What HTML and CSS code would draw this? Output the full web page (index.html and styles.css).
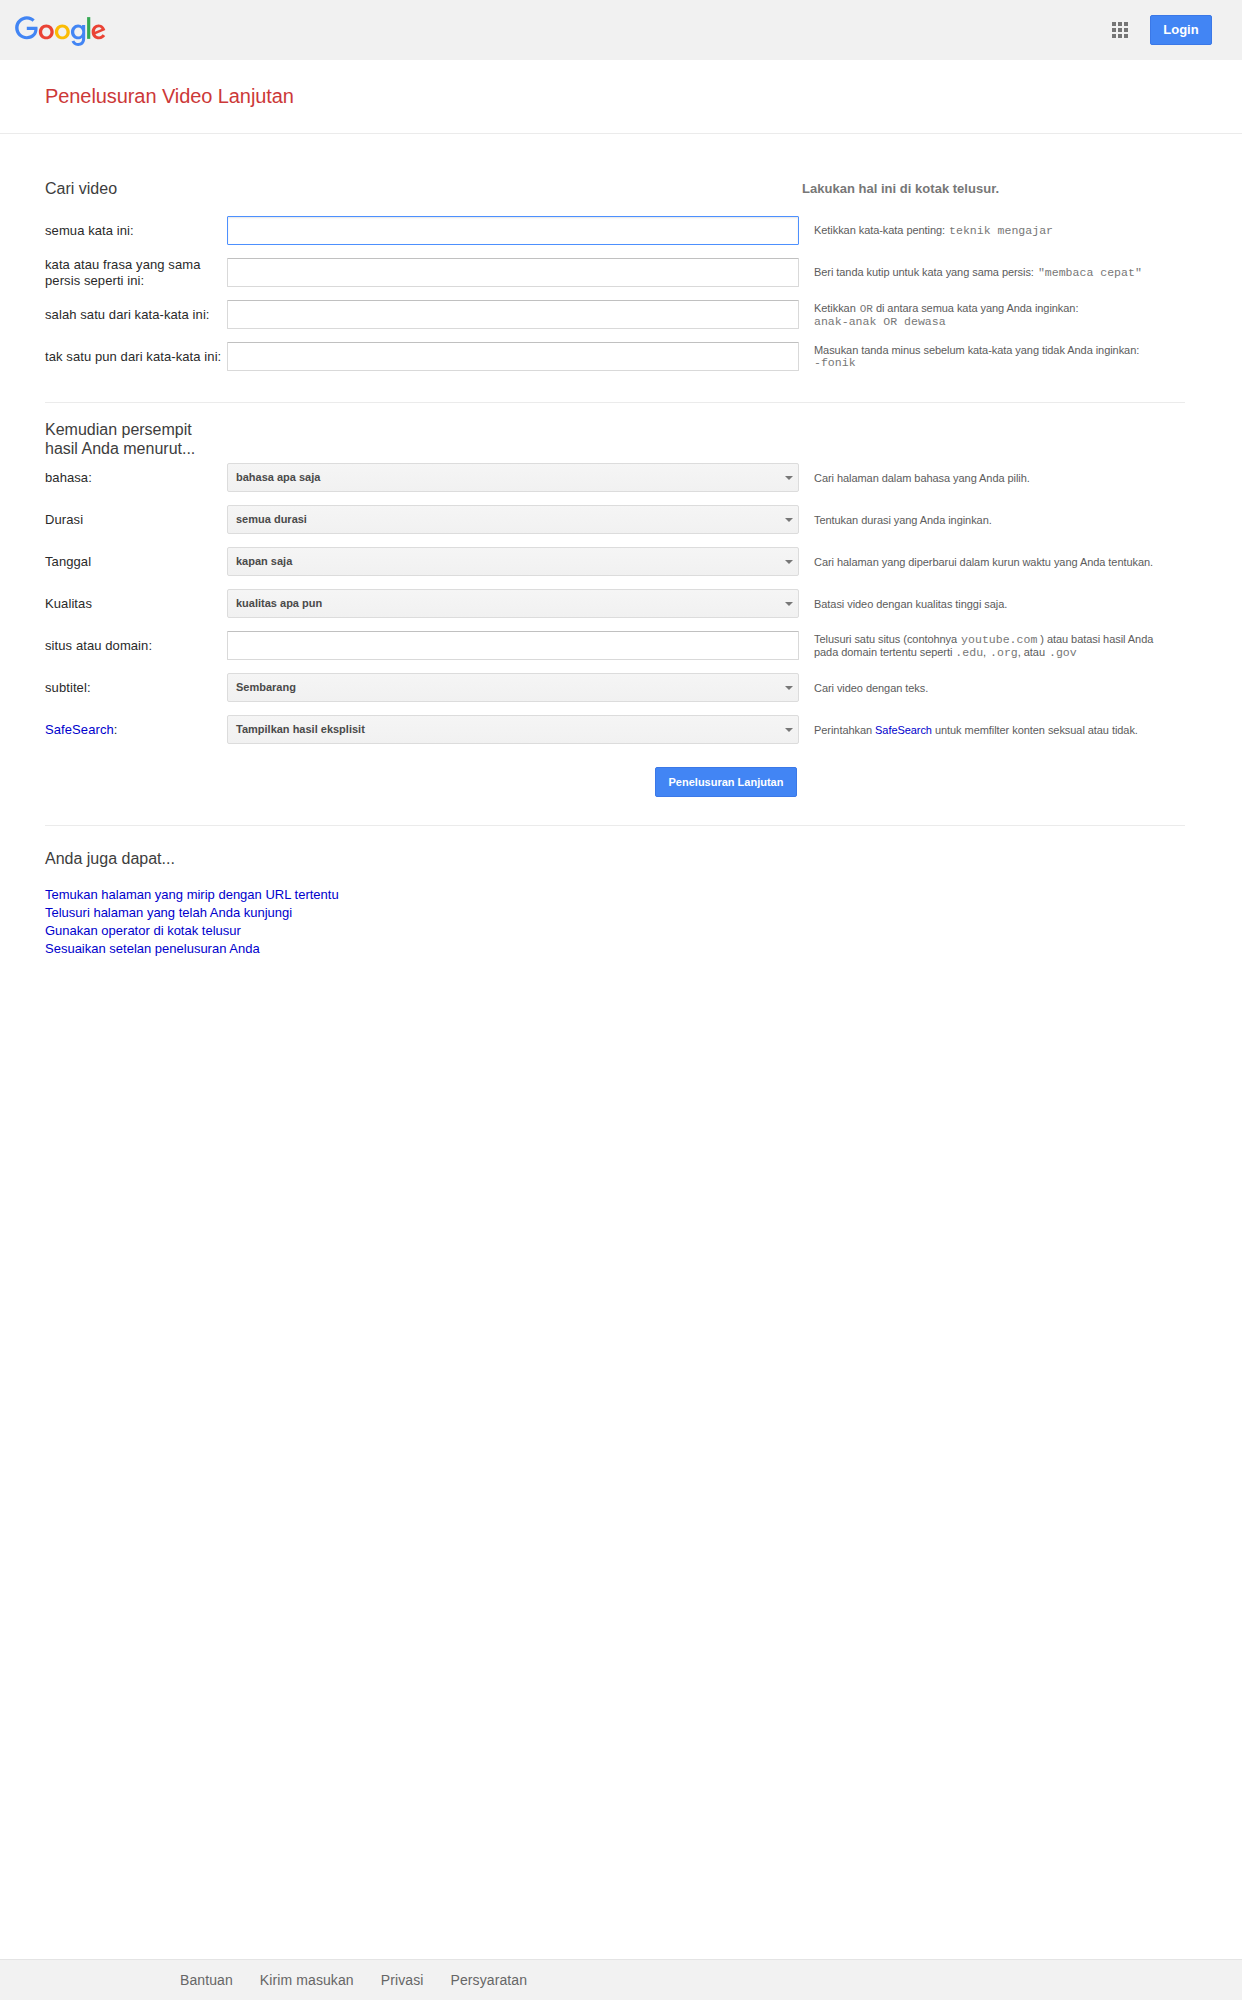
FILE: index.html
```html
<!DOCTYPE html>
<html lang="id">
<head>
<meta charset="utf-8">
<title>Penelusuran Video Lanjutan</title>
<link rel="stylesheet" href="styles.css">
</head>
<body>
<header class="topbar">
  <svg class="logo" viewBox="0 0 272 92" aria-label="Google">
    <path fill="#EA4335" d="M115.75 47.18c0 12.77-9.99 22.18-22.25 22.18s-22.25-9.41-22.25-22.18C71.25 34.32 81.24 25 93.5 25s22.25 9.32 22.25 22.18zm-9.74 0c0-7.98-5.79-13.44-12.51-13.44S80.99 39.2 80.99 47.18c0 7.9 5.79 13.44 12.51 13.44s12.51-5.55 12.51-13.44z"/>
    <path fill="#FBBC05" d="M163.75 47.18c0 12.77-9.99 22.18-22.25 22.18s-22.25-9.41-22.25-22.18c0-12.85 9.99-22.18 22.25-22.18s22.25 9.32 22.25 22.18zm-9.74 0c0-7.98-5.79-13.44-12.51-13.44s-12.51 5.46-12.51 13.44c0 7.9 5.79 13.44 12.51 13.44s12.51-5.55 12.51-13.44z"/>
    <path fill="#4285F4" d="M209.75 26.34v39.82c0 16.38-9.66 23.07-21.08 23.07-10.75 0-17.22-7.19-19.66-13.07l8.48-3.53c1.51 3.61 5.21 7.87 11.17 7.87 7.31 0 11.84-4.51 11.84-13v-3.19h-.34c-2.18 2.69-6.38 5.04-11.68 5.04-11.09 0-21.25-9.66-21.25-22.09 0-12.52 10.16-22.26 21.25-22.26 5.29 0 9.49 2.35 11.68 4.96h.34v-3.61h9.25zm-8.56 20.92c0-7.81-5.21-13.52-11.84-13.52-6.72 0-12.35 5.71-12.35 13.52 0 7.73 5.63 13.36 12.35 13.36 6.63 0 11.84-5.63 11.84-13.36z"/>
    <path fill="#34A853" d="M225 3v65h-9.5V3h9.5z"/>
    <path fill="#EA4335" d="M262.02 54.48l7.56 5.04c-2.44 3.61-8.32 9.83-18.48 9.83-12.6 0-22.01-9.74-22.01-22.18 0-13.19 9.49-22.18 20.92-22.18 11.51 0 17.14 9.16 18.98 14.11l1.01 2.52-29.65 12.28c2.27 4.45 5.8 6.72 10.75 6.72 4.96 0 8.4-2.44 10.92-6.14zm-23.27-7.98l19.82-8.23c-1.09-2.77-4.37-4.7-8.23-4.7-4.95 0-11.84 4.37-11.59 12.93z"/>
    <path fill="#4285F4" d="M35.29 41.41V32H67c.31 1.64.47 3.58.47 5.68 0 7.06-1.93 15.79-8.15 22.01-6.05 6.3-13.78 9.66-24.02 9.66C16.32 69.35.36 53.89.36 34.91.36 15.93 16.32.47 35.3.47c10.5 0 17.98 4.12 23.6 9.49l-6.64 6.64c-4.03-3.78-9.49-6.72-16.97-6.72-13.86 0-24.7 11.17-24.7 25.03 0 13.86 10.84 25.03 24.7 25.03 8.99 0 14.11-3.61 17.39-6.89 2.66-2.66 4.41-6.46 5.1-11.65l-22.49.01z"/>
  </svg>
  <div class="apps" aria-label="Aplikasi">
    <i></i><i></i><i></i><i></i><i></i><i></i><i></i><i></i><i></i>
  </div>
  <a class="login" href="#">Login</a>
</header>

<div class="titleband"><h1>Penelusuran Video Lanjutan</h1></div>

<main class="content">
  <div class="headrow">
    <h2 class="heading">Cari video</h2>
    <div class="headhint">Lakukan hal ini di kotak telusur.</div>
  </div>
  <div class="rows">
    <div class="row"><label class="lbl">semua kata ini:</label><input class="field focused" type="text"><p class="hint">Ketikkan kata-kata penting: <span class="mono">teknik mengajar</span></p></div>
    <div class="row"><label class="lbl">kata atau frasa yang sama persis seperti ini:</label><input class="field" type="text"><p class="hint">Beri tanda kutip untuk kata yang sama persis: <span class="mono">"membaca cepat"</span></p></div>
    <div class="row"><label class="lbl">salah satu dari kata-kata ini:</label><input class="field" type="text"><p class="hint">Ketikkan <span class="mono small">OR</span> di antara semua kata yang Anda inginkan:<br><span class="mono">anak-anak OR dewasa</span></p></div>
    <div class="row"><label class="lbl">tak satu pun dari kata-kata ini:</label><input class="field" type="text"><p class="hint">Masukan tanda minus sebelum kata-kata yang tidak Anda inginkan:<br><span class="mono">-fonik</span></p></div>
  </div>
  <hr class="rule first">

  <h2 class="heading narrow">Kemudian persempit<br>hasil Anda menurut...</h2>
  <div class="rows">
    <div class="row"><label class="lbl">bahasa:</label><div class="select">bahasa apa saja</div><p class="hint">Cari halaman dalam bahasa yang Anda pilih.</p></div>
    <div class="row"><label class="lbl">Durasi</label><div class="select">semua durasi</div><p class="hint">Tentukan durasi yang Anda inginkan.</p></div>
    <div class="row"><label class="lbl">Tanggal</label><div class="select">kapan saja</div><p class="hint">Cari halaman yang diperbarui dalam kurun waktu yang Anda tentukan.</p></div>
    <div class="row"><label class="lbl">Kualitas</label><div class="select">kualitas apa pun</div><p class="hint">Batasi video dengan kualitas tinggi saja.</p></div>
    <div class="row"><label class="lbl">situs atau domain:</label><input class="field" type="text"><p class="hint">Telusuri satu situs (contohnya <span class="mono">youtube.com</span> ) atau batasi hasil Anda<br>pada domain tertentu seperti <span class="mono">.edu</span>, <span class="mono">.org</span>, atau <span class="mono">.gov</span></p></div>
    <div class="row"><label class="lbl">subtitel:</label><div class="select">Sembarang</div><p class="hint">Cari video dengan teks.</p></div>
    <div class="row"><label class="lbl"><a href="#">SafeSearch</a>:</label><div class="select">Tampilkan hasil eksplisit</div><p class="hint">Perintahkan <a href="#">SafeSearch</a> untuk memfilter konten seksual atau tidak.</p></div>
  </div>
  <div class="submitrow"><button class="submit" type="button">Penelusuran Lanjutan</button></div>
  <hr class="rule second">

  <h2 class="heading also">Anda juga dapat...</h2>
  <ul class="links">
    <li><a href="#">Temukan halaman yang mirip dengan URL tertentu</a></li>
    <li><a href="#">Telusuri halaman yang telah Anda kunjungi</a></li>
    <li><a href="#">Gunakan operator di kotak telusur</a></li>
    <li><a href="#">Sesuaikan setelan penelusuran Anda</a></li>
  </ul>
</main>

<footer class="footer">
  <a href="#">Bantuan</a><a href="#">Kirim masukan</a><a href="#">Privasi</a><a href="#">Persyaratan</a>
</footer>
</body>
</html>
```

FILE: styles.css
```css
* { box-sizing: border-box; }
html, body { margin: 0; padding: 0; }
body {
  min-height: 2000px;
  display: flex;
  flex-direction: column;
  background: #fff;
  color: #222;
  font-family: "Liberation Sans", Arial, sans-serif;
  font-size: 13px;
}
a { color: #0000cc; text-decoration: none; }

.topbar {
  height: 60px;
  background: #f1f1f1;
  display: flex;
  align-items: center;
  padding: 0 30px 0 15px;
}
.logo { width: 91px; height: 31px; margin-top: 3px; margin-right: auto; }
.apps {
  display: grid;
  grid-template-columns: repeat(3, 4px);
  grid-auto-rows: 4px;
  gap: 2px;
  margin-right: 22px;
}
.apps i { display: block; background: #757575; }
.login {
  width: 62px;
  height: 30px;
  line-height: 28px;
  text-align: center;
  background: #4285f4;
  border: 1px solid #3b78e7;
  border-radius: 2px;
  color: #fff;
  font-weight: bold;
  font-size: 13px;
}

.titleband { height: 74px; padding: 24px 45px 0; border-bottom: 1px solid #ebebeb; }
.titleband h1 { margin: 0; font-size: 20px; line-height: 24px; font-weight: normal; letter-spacing: -0.08px; color: #cc3838; }

.content { padding: 0 57px 0 45px; }
.heading { margin: 0; font-size: 16px; line-height: 18px; font-weight: normal; color: #3d3d3d; }
.headrow {
  display: grid;
  grid-template-columns: 754px 1fr;
  align-items: center;
  padding-top: 46px;
  margin-bottom: 18px;
}
.headhint { padding-left: 3px; font-size: 13px; line-height: 18px; font-weight: bold; letter-spacing: 0.02px; color: #777; }

.rows { display: flex; flex-direction: column; gap: 13px; }
.row {
  display: grid;
  grid-template-columns: 182px 572px 1fr;
  grid-template-rows: 29px;
  align-items: center;
  height: 29px;
}
.lbl { font-size: 13px; line-height: 16px; letter-spacing: 0.09px; color: #2a2a2a; padding-right: 4px; }
.field {
  display: block;
  width: 100%;
  height: 29px;
  margin: 0;
  padding: 0 8px;
  background: #fff;
  border: 1px solid #d9d9d9;
  border-top-color: #c0c0c0;
  border-radius: 1px;
  outline: none;
}
.field.focused { border-color: #4d90fe; box-shadow: inset 0 1px 2px rgba(0,0,0,.1); }
.select {
  position: relative;
  height: 29px;
  line-height: 26px;
  padding-left: 8px;
  background: linear-gradient(#f5f5f5, #f1f1f1);
  border: 1px solid #dcdcdc;
  border-radius: 2px;
  font-size: 11px;
  font-weight: bold;
  color: #4a4a4a;
}
.select::after {
  content: "";
  position: absolute;
  right: 5px;
  top: 12px;
  border-style: solid;
  border-width: 4px 4px 0;
  border-color: #777 transparent transparent;
}
.hint { margin: 0; padding-left: 15px; font-size: 11px; letter-spacing: -0.06px; color: #5c5c5c; }
.mono { margin-left: 1px; font-family: "Liberation Mono", "Courier New", monospace; font-size: 11.55px; letter-spacing: 0; color: #777; }
br + .mono { margin-left: 0; }
.mono.small { font-size: 11px; }
.hint a { color: #0000cc; }

.rule { height: 1px; margin: 0; border: 0; background: #ebebeb; }
.rule.first { margin-top: 31px; }
.narrow { line-height: 19px; margin-top: 17px; margin-bottom: 5px; }

.submitrow { display: flex; justify-content: flex-end; width: 752px; margin-top: 23px; }
.submit {
  width: 142px;
  height: 30px;
  padding: 0;
  background: #4285f4;
  border: 1px solid #3b78e7;
  border-radius: 2px;
  color: #fff;
  font-family: inherit;
  font-size: 11px;
  font-weight: bold;
}
.rule.second { margin-top: 28px; }
.also { margin-top: 24px; margin-bottom: 18px; }

.links { margin: 0; padding: 0; list-style: none; font-size: 13px; line-height: 18px; }

.footer {
  margin-top: auto;
  height: 41px;
  display: flex;
  gap: 27px;
  align-items: center;
  padding-left: 180px;
  background: #f2f2f2;
  border-top: 1px solid #e4e4e4;
  font-size: 14px;
  letter-spacing: 0.1px;
}
.footer a { color: #666; }
```
